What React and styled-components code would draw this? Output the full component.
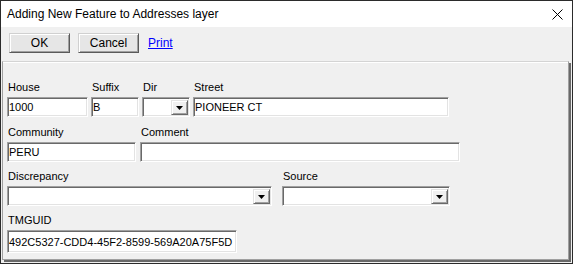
import React from "react";
import styled, { createGlobalStyle } from "styled-components";

const Global = createGlobalStyle`
  html, body { margin: 0; padding: 0; background: #ffffff; }
  body { font-family: "Liberation Sans", Arial, sans-serif; }
  * { box-sizing: border-box; }
`;

const Window = styled.div`
  width: 573px;
  height: 264px;
  border: 1px solid #2b2b2b;
  background: #f0f0f0;
  display: flex;
  flex-direction: column;
`;

const TitleBar = styled.div`
  height: 26px;
  background: #ffffff;
  display: flex;
  align-items: center;
  justify-content: space-between;
  padding: 0 9px 0 6px;
  font-family: "Segoe UI", "Liberation Sans", Arial, sans-serif;
  font-size: 12px;
  color: #000;
`;

const CloseIcon = styled.svg`
  width: 11px;
  height: 11px;
  margin-top: 1px;
`;

const Toolbar = styled.div`
  height: 34px;
  display: flex;
  align-items: flex-start;
  gap: 8px;
  padding: 6px 0 0 8px;
`;

const PushButton = styled.button`
  width: 61px;
  height: 20px;
  padding: 0;
  font-family: "Liberation Sans", Arial, sans-serif;
  font-size: 12px;
  color: #000;
  background: #e6e6e6;
  border: 1px solid;
  border-color: #d0d0d0 #5a5a5a #5a5a5a #d0d0d0;
  box-shadow: inset 1px 1px 0 #ffffff, inset -1px -1px 0 #a0a0a0;
`;

const LinkText = styled.a`
  font-size: 12px;
  color: #0000ff;
  text-decoration: underline;
  margin: 3px 0 0 1px;
  cursor: pointer;
`;

const Panel = styled.div`
  height: 199px;
  margin: 0 3px 3px 1px;
  border: 1px solid #a0a0a0;
  border-top-color: #d4d4d4;
  box-shadow: inset 0 1px 0 #ffffff, 2px 2px 0 #696969;
  padding: 19px 0 0 4px;
  display: flex;
  flex-direction: column;
`;

const Row = styled.div`
  display: flex;
  margin-top: ${(p) => p.top || 0}px;
`;

const Field = styled.div`
  width: ${(p) => p.w}px;
  margin-left: ${(p) => p.gap || 0}px;
  display: flex;
  flex-direction: column;
  gap: 3px;
`;

const Label = styled.div`
  height: 13px;
  line-height: 13px;
  font-size: 11px;
  color: #000;
  padding-left: 1px;
  white-space: nowrap;
`;

const TextBox = styled.input`
  width: 100%;
  height: ${(p) => p.h || 20}px;
  margin: 0;
  padding: 0 0 0 1px;
  font-family: "Liberation Sans", Arial, sans-serif;
  font-size: 11px;
  color: #000;
  background: #ffffff;
  border: 1px solid;
  border-color: #a0a0a0 #ffffff #ffffff #a0a0a0;
  box-shadow: inset 1px 1px 0 #696969, inset -1px -1px 0 #e3e3e3;
  outline: none;
`;

const Combo = styled.div`
  width: 100%;
  height: 20px;
  background: #ffffff;
  border: 1px solid;
  border-color: #a0a0a0 #ffffff #ffffff #a0a0a0;
  box-shadow: inset 1px 1px 0 #696969, inset -1px -1px 0 #e3e3e3;
  display: flex;
  justify-content: flex-end;
  align-items: stretch;
  padding: 1px;
`;

const DropButton = styled.div`
  width: 17px;
  margin: 1px 0 0 0;
  background: #f0f0f0;
  border: 1px solid;
  border-color: #e3e3e3 #696969 #696969 #e3e3e3;
  box-shadow: inset 1px 1px 0 #ffffff, inset -1px -1px 0 #a0a0a0;
  display: flex;
  align-items: center;
  justify-content: center;
`;

const Arrow = styled.svg`
  width: 7px;
  height: 4px;
  margin-top: 1px;
`;

const DropDown = () => (
  <Combo>
    <DropButton>
      <Arrow viewBox="0 0 7 4">
        <path d="M0 0 H7 L3.5 4 Z" fill="#000" />
      </Arrow>
    </DropButton>
  </Combo>
);

export default function App() {
  return (
    <>
      <Global />
      <Window>
        <TitleBar>
          <span>Adding New Feature to Addresses layer</span>
          <CloseIcon viewBox="0 0 11 11">
            <path d="M0.5 0.5 L10.5 10.5 M10.5 0.5 L0.5 10.5" stroke="#000" strokeWidth="1" fill="none" />
          </CloseIcon>
        </TitleBar>
        <Toolbar>
          <PushButton>OK</PushButton>
          <PushButton>Cancel</PushButton>
          <LinkText>Print</LinkText>
        </Toolbar>
        <Panel>
          <Row>
            <Field w={81}>
              <Label>House</Label>
              <TextBox readOnly value="1000" />
            </Field>
            <Field w={48} gap={3}>
              <Label>Suffix</Label>
              <TextBox readOnly value="B" />
            </Field>
            <Field w={48} gap={3}>
              <Label>Dir</Label>
              <DropDown />
            </Field>
            <Field w={256} gap={3}>
              <Label>Street</Label>
              <TextBox readOnly value="PIONEER CT" />
            </Field>
          </Row>
          <Row top={9}>
            <Field w={129}>
              <Label>Community</Label>
              <TextBox readOnly value="PERU" />
            </Field>
            <Field w={320} gap={4}>
              <Label>Comment</Label>
              <TextBox readOnly value="" />
            </Field>
          </Row>
          <Row top={8}>
            <Field w={265}>
              <Label>Discrepancy</Label>
              <DropDown />
            </Field>
            <Field w={168} gap={10}>
              <Label>Source</Label>
              <DropDown />
            </Field>
          </Row>
          <Row top={8}>
            <Field w={230}>
              <Label>TMGUID</Label>
              <TextBox h={23} readOnly value="492C5327-CDD4-45F2-8599-569A20A75F5D" />
            </Field>
          </Row>
        </Panel>
      </Window>
    </>
  );
}
